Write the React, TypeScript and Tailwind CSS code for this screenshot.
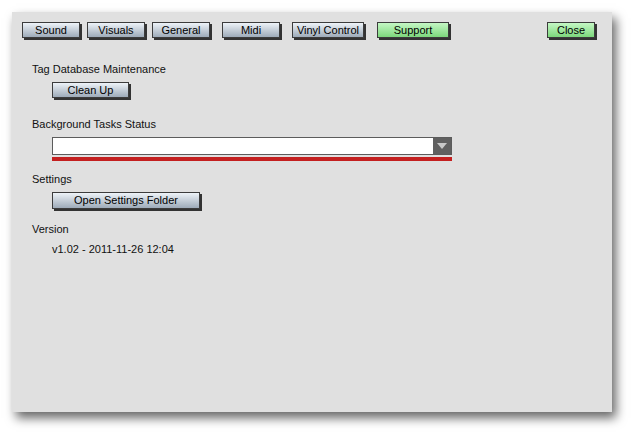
import React from "react";

type BtnProps = {
  label: string;
  className?: string;
  green?: boolean;
};

function Btn({ label, className = "", green = false }: BtnProps) {
  return (
    <div
      className={`flex items-center justify-center border border-[#3c3c3c] text-[11px] leading-none text-black shadow-[2px_2px_0_#333] ${
        green
          ? "bg-gradient-to-b from-[#c4f7c4] to-[#7cd87c]"
          : "bg-gradient-to-b from-[#eef3f8] to-[#9eabb9]"
      } ${className}`}
    >
      {label}
    </div>
  );
}

export default function App() {
  return (
    <div
      className="w-[632px] h-[432px] bg-white pt-[12px] pl-[12px]"
      style={{ fontFamily: '"Liberation Sans", Arial, sans-serif' }}
    >
      <div className="w-[600px] h-[400px] bg-[#e0e0e0] shadow-[4px_6px_10px_rgba(0,0,0,0.6)] flex flex-col pt-[10px] pl-[10px]">
        <div className="flex h-[16px]">
          <Btn label="Sound" className="w-[58px] h-[16px]" />
          <Btn label="Visuals" className="w-[58px] h-[16px] ml-[7px]" />
          <Btn label="General" className="w-[58px] h-[16px] ml-[7px]" />
          <Btn label="Midi" className="w-[58px] h-[16px] ml-[12px]" />
          <Btn label="Vinyl Control" className="w-[72px] h-[16px] ml-[12px]" />
          <Btn label="Support" green className="w-[72px] h-[16px] ml-[13px]" />
          <Btn label="Close" green className="w-[48px] h-[16px] ml-[98px]" />
        </div>

        <div className="flex flex-col pl-[10px] text-[11px] text-[#111]">
          <div className="mt-[24px] leading-[14px]">Tag Database Maintenance</div>
          <div className="mt-[6px] pl-[20px]">
            <Btn label="Clean Up" className="w-[77px] h-[16px]" />
          </div>

          <div className="mt-[19px] leading-[14px]">Background Tasks Status</div>
          <div className="mt-[6px] pl-[20px] flex flex-col w-[420px]">
            <div className="flex h-[18px] w-[400px] border border-[#5c5c5c] bg-white">
              <div className="flex-1" />
              <div className="w-[18px] bg-[#606060] flex items-center justify-center">
                <svg width="10" height="6" viewBox="0 0 10 6">
                  <polygon points="0,0 10,0 5,6" fill="#c8c8c8" />
                </svg>
              </div>
            </div>
            <div className="mt-[2px] h-[4px] w-[400px] bg-[#c42020]" />
          </div>

          <div className="mt-[11px] leading-[14px]">Settings</div>
          <div className="mt-[6px] pl-[20px]">
            <Btn label="Open Settings Folder" className="w-[148px] h-[17px]" />
          </div>

          <div className="mt-[13px] leading-[14px]">Version</div>
          <div className="mt-[6px] pl-[20px] leading-[14px]">v1.02 - 2011-11-26 12:04</div>
        </div>
      </div>
    </div>
  );
}
